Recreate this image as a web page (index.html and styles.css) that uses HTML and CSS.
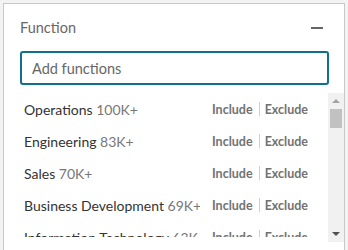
FILE: index.html
```html
<!DOCTYPE html>
<html lang="en">
<head>
    <meta charset="UTF-8">
    <title>Function filter</title>
    <link rel="stylesheet" href="styles.css">
</head>
<body>
    <div class="panel">
        <div class="panel-header">
            <span class="panel-title">Function</span>
            <span class="collapse"></span>
        </div>
        <div class="search">
            <input type="text" class="search-input" placeholder="Add functions">
        </div>
        <div class="list-wrap">
            <ul class="list">
                <li class="item">
                    <span class="name">Operations <span class="count">100K+</span></span>
                    <span class="actions"><a class="act">Include</a><span class="sep"></span><a class="act">Exclude</a></span>
                </li>
                <li class="item">
                    <span class="name">Engineering <span class="count">83K+</span></span>
                    <span class="actions"><a class="act">Include</a><span class="sep"></span><a class="act">Exclude</a></span>
                </li>
                <li class="item">
                    <span class="name">Sales <span class="count">70K+</span></span>
                    <span class="actions"><a class="act">Include</a><span class="sep"></span><a class="act">Exclude</a></span>
                </li>
                <li class="item">
                    <span class="name">Business Development <span class="count">69K+</span></span>
                    <span class="actions"><a class="act">Include</a><span class="sep"></span><a class="act">Exclude</a></span>
                </li>
                <li class="item">
                    <span class="name">Information Technology <span class="count">63K+</span></span>
                    <span class="actions"><a class="act">Include</a><span class="sep"></span><a class="act">Exclude</a></span>
                </li>
            </ul>
            <div class="scrollbar">
                <span class="arrow arrow-up"></span>
                <span class="thumb"></span>
                <span class="track"></span>
                <span class="arrow arrow-down"></span>
            </div>
        </div>
    </div>
</body>
</html>
```

FILE: styles.css
```css
body {
    margin: 0;
    padding: 3px 3px 0 3px;
    background-color: #f3f3f3;
    font-family: Lato, "Open Sans", sans-serif;
    height: 250px;
    box-sizing: border-box;
    overflow: hidden;
}
.panel {
    background-color: #fff;
    border: 1px solid #c9c9c9;
    border-bottom: none;
    height: 247px;
    box-sizing: border-box;
}
.panel-header {
    display: flex;
    align-items: center;
    justify-content: space-between;
    height: 47px;
    padding: 0 21px 0 16px;
}
.panel-title {
    font-size: 14.5px;
    color: #666;
}
.collapse {
    width: 12px;
    height: 2px;
    background-color: #666;
}
.search {
    padding: 0 15px 0 16px;
}
.search-input {
    display: block;
    width: 100%;
    height: 34px;
    box-sizing: border-box;
    border: 2px solid #0f6f8f;
    border-radius: 3px;
    padding: 0 10px;
    font-family: inherit;
    font-size: 14.5px;
    color: #333;
    outline: none;
}
.search-input::placeholder {
    color: #666;
}
.list-wrap {
    display: flex;
    align-items: flex-start;
    margin-top: 8px;
    height: 149px;
}
.list {
    flex: 1;
    height: 144px;
    list-style: none;
    margin: 0;
    padding: 0 20px;
    overflow: hidden;
}
.item {
    display: flex;
    align-items: center;
    height: 32px;
    white-space: nowrap;
}
.name {
    flex: 1;
    min-width: 0;
    font-size: 14px;
    color: #333;
    overflow: hidden;
}
.count {
    color: #777;
}
.actions {
    display: flex;
    align-items: center;
    flex-shrink: 0;
    padding-left: 12px;
}
.act {
    font-size: 12.5px;
    font-weight: 700;
    color: #727272;
}
.sep {
    width: 1px;
    height: 14px;
    margin: 0 5px 0 6px;
    background-color: #d0d0d0;
}
.scrollbar {
    display: flex;
    flex-direction: column;
    align-items: center;
    align-self: stretch;
    width: 16px;
    background-color: #f1f1f1;
}
.arrow {
    width: 0;
    height: 0;
    border-left: 4px solid transparent;
    border-right: 4px solid transparent;
}
.arrow-up {
    margin-top: 6px;
    border-bottom: 4px solid #a3a3a3;
}
.arrow-down {
    margin-bottom: 6px;
    border-top: 4px solid #505050;
}
.thumb {
    width: 12px;
    height: 19px;
    margin-top: 6px;
    background-color: #c1c1c1;
}
.track {
    flex: 1;
}
```
